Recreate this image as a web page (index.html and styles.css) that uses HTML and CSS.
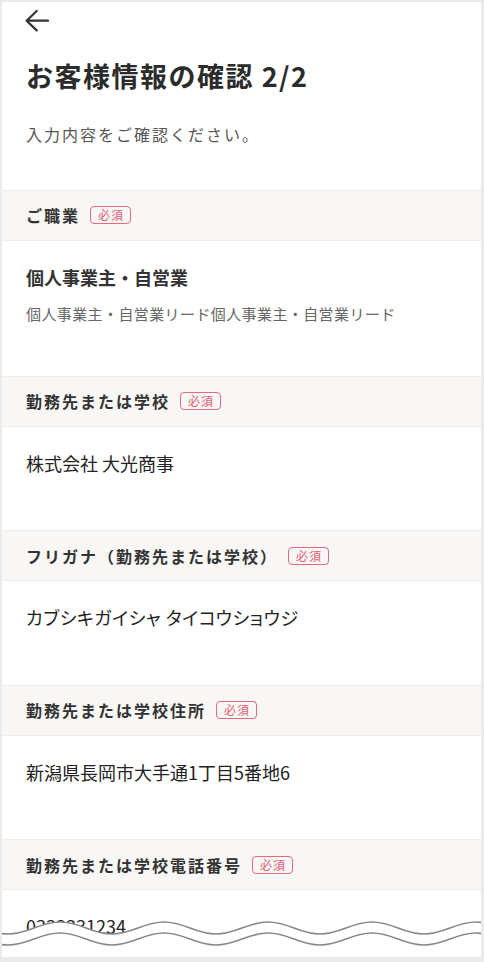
FILE: index.html
```html
<!DOCTYPE html>
<html lang="ja">
<head>
<meta charset="utf-8">
<title>お客様情報の確認 2/2</title>
<link rel="stylesheet" href="styles.css">
</head>
<body>
<div class="screen">
  <div class="back">
    <svg class="back-icon" width="24" height="24" viewBox="0 0 24 24" aria-hidden="true">
      <path d="M23 11.7H1.6M11.7 2L1.6 11.7L11.7 21.4" fill="none" stroke="#333" stroke-width="2.2" stroke-linecap="round" stroke-linejoin="round"/>
    </svg>
  </div>
  <h1 class="title">お客様情報の確認 2/2</h1>
  <p class="lead">入力内容をご確認ください。</p>

  <div class="fields">
    <div class="field-head"><span class="field-label">ご職業</span><span class="badge">必須</span></div>
    <div class="field-body field-body--desc">
      <div class="value value--bold">個人事業主・自営業</div>
      <div class="desc">個人事業主・自営業リード個人事業主・自営業リード</div>
    </div>

    <div class="field-head"><span class="field-label">勤務先または学校</span><span class="badge">必須</span></div>
    <div class="field-body"><div class="value">株式会社 大光商事</div></div>

    <div class="field-head"><span class="field-label">フリガナ（勤務先または学校）</span><span class="badge">必須</span></div>
    <div class="field-body"><div class="value value--kana">カブシキガイシャ タイコウショウジ</div></div>

    <div class="field-head"><span class="field-label">勤務先または学校住所</span><span class="badge">必須</span></div>
    <div class="field-body"><div class="value">新潟県長岡市大手通1丁目5番地6</div></div>

    <div class="field-head"><span class="field-label">勤務先または学校電話番号</span><span class="badge">必須</span></div>
    <div class="field-body"><div class="value">0333331234</div></div>
  </div>

  <svg class="cut" width="479" height="47" viewBox="0 0 479 47" aria-hidden="true">
    <path d="M-46 12C-25.2 12-14.8 24 6 24S37.2 12 58 12S89.2 24 110 24S141.2 12 162 12S193.2 24 214 24S245.2 12 266 12S297.2 24 318 24S349.2 12 370 12S401.2 24 422 24S453.2 12 474 12S505.2 24 526 24L526 47L-46 47Z" fill="#fff"/>
    <path d="M-46 12C-25.2 12-14.8 24 6 24S37.2 12 58 12S89.2 24 110 24S141.2 12 162 12S193.2 24 214 24S245.2 12 266 12S297.2 24 318 24S349.2 12 370 12S401.2 24 422 24S453.2 12 474 12S505.2 24 526 24" fill="none" stroke="#888" stroke-width="1.7"/>
    <path d="M-46 23C-25.2 23-14.8 35 6 35S37.2 23 58 23S89.2 35 110 35S141.2 23 162 23S193.2 35 214 35S245.2 23 266 23S297.2 35 318 35S349.2 23 370 23S401.2 35 422 35S453.2 23 474 23S505.2 35 526 35" fill="none" stroke="#888" stroke-width="1.7"/>
  </svg>
</div>
</body>
</html>
```

FILE: styles.css
```css
html, body {
  margin: 0;
  padding: 0;
}

body {
  background: #ebebeb;
  font-family: "Noto Sans CJK JP", "Noto Sans", sans-serif;
  color: #333;
  height: 962px;
  overflow: hidden;
}

.screen {
  position: relative;
  margin: 2px 0 0 2px;
  width: 479px;
  height: 955px;
  background: #fff;
  overflow: hidden;
}

.back {
  height: 40px;
  padding: 7px 0 0 23px;
  box-sizing: border-box;
}

.back-icon {
  display: block;
}

.title {
  margin: 15.5px 0 0;
  padding: 0 24px;
  font-size: 27px;
  line-height: 36px;
  font-weight: 700;
  letter-spacing: 1.5px;
  color: #2b2b2b;
}

.lead {
  margin: 28px 0 0;
  padding: 0 24px;
  font-size: 16px;
  line-height: 24px;
  letter-spacing: 2px;
  color: #555;
}

.fields {
  margin-top: 44.4px;
}

.field-head {
  display: flex;
  align-items: center;
  height: 49px;
  padding: 0 24px;
  background: #f8f7f5;
  border-top: 1px solid #efedeb;
  border-bottom: 1px solid #efedeb;
}

.field-label {
  font-size: 16px;
  line-height: 24px;
  font-weight: 700;
  letter-spacing: 2px;
  color: #333;
}

.badge {
  display: inline-flex;
  align-items: center;
  justify-content: center;
  box-sizing: border-box;
  height: 18px;
  margin-left: 10px;
  padding: 0 6px 0 7px;
  border: 1.5px solid #e5697f;
  border-radius: 4px;
  font-size: 12px;
  line-height: 1;
  letter-spacing: 1px;
  color: #e05c74;
  font-weight: 400;
}

.field-body {
  padding: 24px 24px 55.5px;
}

.field-body--desc {
  padding-bottom: 52px;
}

.value {
  font-size: 18px;
  line-height: 24px;
  color: #222;
}

.value--bold {
  font-weight: 700;
  color: #333;
}

.value--kana {
  font-feature-settings: "palt" 1;
  letter-spacing: 0.6px;
}

.desc {
  margin-top: 15px;
  font-size: 15px;
  line-height: 20px;
  letter-spacing: 0.4px;
  color: #666;
}

.cut {
  position: absolute;
  left: 0;
  bottom: 0;
  display: block;
}
```
